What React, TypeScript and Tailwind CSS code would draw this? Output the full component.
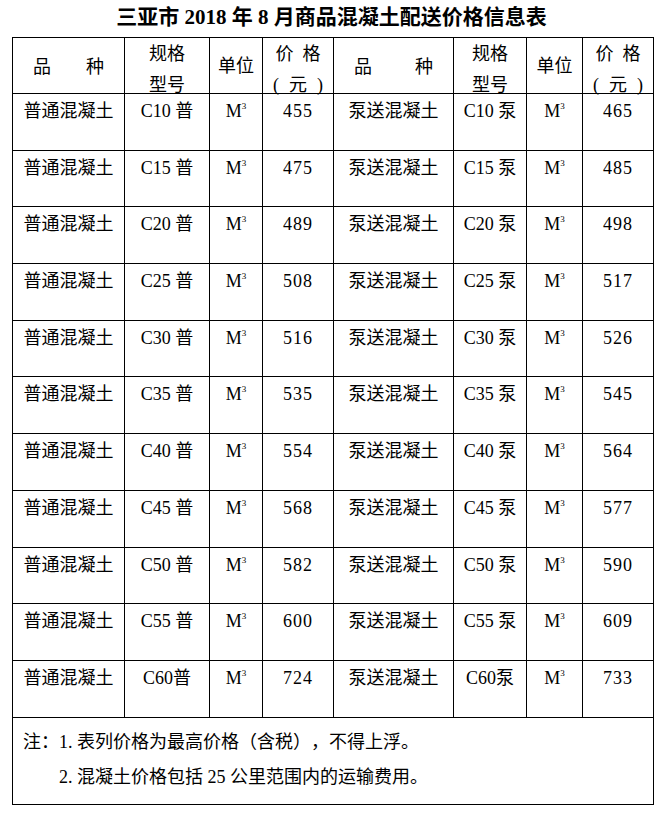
const rows: [string, string, string][] = [
  ['C10', '455', '465'],
  ['C15', '475', '485'],
  ['C20', '489', '498'],
  ['C25', '508', '517'],
  ['C30', '516', '526'],
  ['C35', '535', '545'],
  ['C40', '554', '564'],
  ['C45', '568', '577'],
  ['C50', '582', '590'],
  ['C55', '600', '609'],
  ['C60', '724', '733'],
];

function Unit() {
  return (
    <span>
      M<sup className="text-[9px] relative -top-[8px]">3</sup>
    </span>
  );
}

export default function App() {
  const td = 'border border-black text-center align-top pt-[5px] leading-[24px]';
  const th = 'border border-black text-center align-middle font-normal p-0';
  const stack = 'h-[54px] pt-[3px] flex flex-col items-center gap-[7px] leading-[24px]';

  return (
    <div className="w-[663px] min-h-[814px] bg-white text-black font-['Liberation_Serif','Noto_Sans_CJK_SC',serif] text-[18px] [text-spacing-trim:space-all]">
      <h1 className="h-[37px] pt-[3px] text-center text-[21px] font-bold leading-[28px]">
        三亚市 2018 年 8 月商品混凝土配送价格信息表
      </h1>
      <table className="ml-[12px] w-[642px] table-fixed border-collapse">
        <colgroup>
          <col className="w-[112px]" />
          <col className="w-[85px]" />
          <col className="w-[53px]" />
          <col className="w-[71px]" />
          <col className="w-[120px]" />
          <col className="w-[73px]" />
          <col className="w-[56px]" />
          <col className="w-[71px]" />
        </colgroup>
        <thead>
          <tr className="h-[56px]">
            {[0, 1].map((i) => (
              <>
                <th key={`a${i}`} className={th}>
                  <div className="flex justify-between px-[20px] pt-[4px]">
                    <span>品</span>
                    <span>种</span>
                  </div>
                </th>
                <th key={`b${i}`} className={th}>
                  <div className={stack}>
                    <span>规格</span>
                    <span>型号</span>
                  </div>
                </th>
                <th key={`c${i}`} className={th}>
                  <div className="pt-[2px]">单位</div>
                </th>
                <th key={`d${i}`} className={th}>
                  <div className={stack}>
                    <span className="flex gap-[9px]">
                      <span>价</span>
                      <span>格</span>
                    </span>
                    <span className="flex gap-[10px]">
                      <span>(</span>
                      <span>元</span>
                      <span>)</span>
                    </span>
                  </div>
                </th>
              </>
            ))}
          </tr>
        </thead>
        <tbody>
          {rows.map(([grade, p1, p2], i) => {
            const last = i === rows.length - 1;
            return (
              <tr key={grade} className="h-[56.7px]">
                <td className={td}>普通混凝土</td>
                <td className={td}>{last ? `${grade}普` : `${grade} 普`}</td>
                <td className={td}>
                  <Unit />
                </td>
                <td className={`${td} tracking-[1px]`}>{p1}</td>
                <td className={td}>泵送混凝土</td>
                <td className={td}>{last ? `${grade}泵` : `${grade} 泵`}</td>
                <td className={td}>
                  <Unit />
                </td>
                <td className={`${td} tracking-[1px]`}>{p2}</td>
              </tr>
            );
          })}
          <tr className="h-[87px]">
            <td colSpan={8} className="border border-black align-top pl-[10px] pt-[7px] leading-[35px]">
              <div>注：1. 表列价格为最高价格（含税），不得上浮。</div>
              <div className="pl-[36px]">2. 混凝土价格包括 25 公里范围内的运输费用。</div>
            </td>
          </tr>
        </tbody>
      </table>
    </div>
  );
}
